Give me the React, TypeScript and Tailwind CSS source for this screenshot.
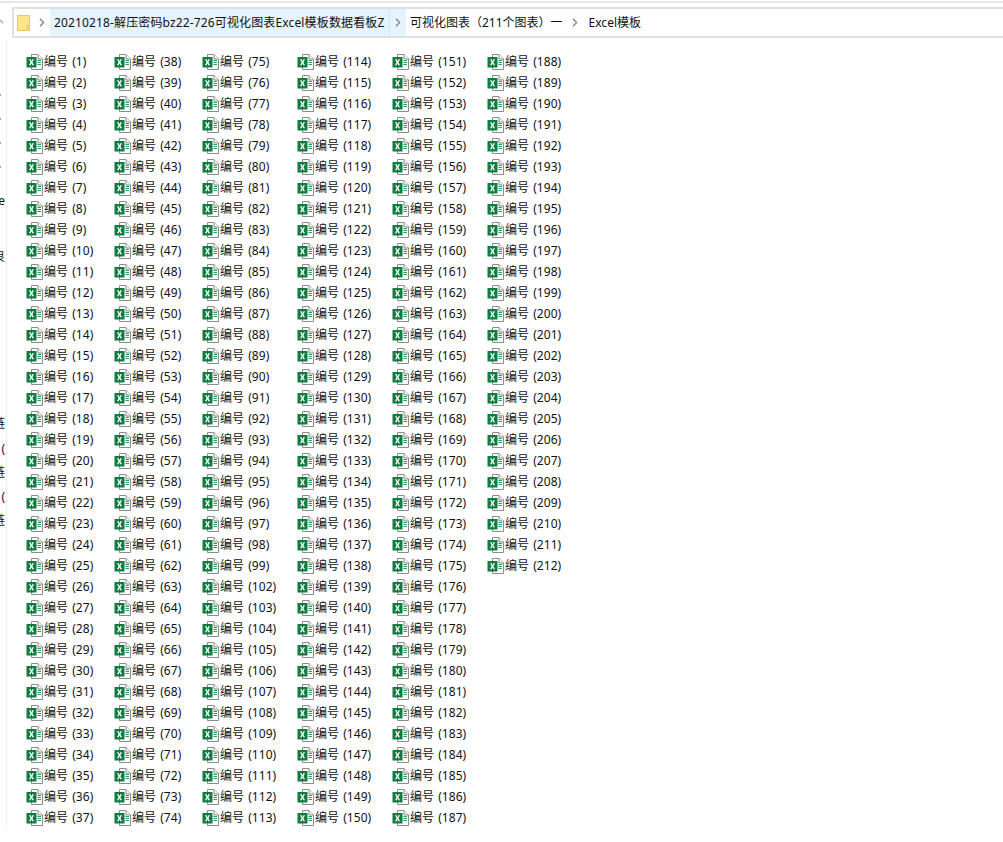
const FONT = "font-['Segoe_UI','Noto_Sans','Noto_Sans_CJK_SC',sans-serif]";

const columns: { width: string; numbers: number[] }[] = [
  { width: "w-[88px]", numbers: range(1, 37) },
  { width: "w-[88px]", numbers: range(38, 74) },
  { width: "w-[95px]", numbers: [...range(75, 99), ...range(102, 113)] },
  { width: "w-[95px]", numbers: range(114, 150) },
  { width: "w-[95px]", numbers: range(151, 187) },
  { width: "w-[95px]", numbers: range(188, 212) },
];

function range(from: number, to: number) {
  const out: number[] = [];
  for (let i = from; i <= to; i++) out.push(i);
  return out;
}

function ExcelIcon() {
  return (
    <svg width="17" height="16" viewBox="0 0 17 16" className="shrink-0">
      <path d="M5.5 .5H12L16.5 5V15.5H5.5Z" fill="#fff" stroke="#8c8c8c" />
      <path d="M12 .5V5H16.5" fill="#f4f4f4" stroke="#8c8c8c" />
      <rect x="11.5" y="6" width="3.5" height="1" fill="#21a366" />
      <rect x="11.5" y="8" width="3.5" height="1" fill="#21a366" />
      <rect x="11.5" y="10" width="3.5" height="1" fill="#21a366" />
      <rect x=".5" y="3" width="10" height="10.5" fill="#107c41" />
      <path d="M3 5.2H4.6L5.5 7.2 6.4 5.2H8L6.4 8.2 8 11.3H6.4L5.5 9.3 4.6 11.3H3L4.6 8.2Z" fill="#fff" />
    </svg>
  );
}

function Chevron() {
  return (
    <svg width="6" height="9" viewBox="0 0 6 9" className="shrink-0">
      <path d="M1 .8 4.6 4.5 1 8.2" fill="none" stroke="#838383" strokeWidth="1.3" />
    </svg>
  );
}

function FolderIcon() {
  return (
    <svg width="13" height="16" viewBox="0 0 13 16" className="shrink-0">
      <rect x=".5" y=".5" width="12" height="15" fill="#ffe48e" stroke="#e8c95c" />
      <rect x="10" y="10" width="2.5" height="5.5" fill="#f7d873" stroke="#e8c95c" strokeWidth=".6" />
    </svg>
  );
}

function SidebarTick() {
  return <div className="h-6 shrink-0 flex items-center"><div className="w-px h-0.5 bg-[#a0a0a0]" /></div>;
}

// the sidebar is cut off by the window, only the last pixels of its labels show
function SidebarBit({ text, className = "" }: { text: string; className?: string }) {
  return (
    <div className={`h-6 w-[5px] shrink-0 flex justify-end overflow-hidden leading-6 ${className}`}>
      <span className="shrink-0">{text}</span>
    </div>
  );
}

export default function App() {
  return (
    <div className={`${FONT} w-[1003px] h-[842px] bg-white text-[12px] text-[#111111] overflow-hidden`}>
      <div className="h-0.5 mt-px bg-[#e6e6e6]" />
      <div className="flex items-center">
        <svg width="8" height="8" viewBox="0 0 8 8" className="-ml-1 mr-1 shrink-0">
          <path d="M.5 6 3.5 2.5 7 6" fill="none" stroke="#9a9a9a" strokeWidth="1.2" />
        </svg>
        <div className="flex items-center ml-1 mt-1 h-[31px] w-[991px] border-y-2 border-l-2 border-[#e0e0e0] whitespace-nowrap">
          <div className="w-9 h-full flex items-center pl-[3px] gap-[9px] shrink-0">
            <FolderIcon />
            <Chevron />
          </div>
          <div className="h-full flex items-center pl-1 w-[340px] bg-[#e5f3ff] border-r border-[#cce8ff] tracking-[0.14px] shrink-0">
            20210218-解压密码bz22-726可视化图表Excel模板数据看板Z
          </div>
          <div className="h-full w-4 flex items-center justify-center bg-[#e5f3ff] shrink-0">
            <Chevron />
          </div>
          <span className="ml-1">可视化图表（211个图表）一</span>
          <span className="ml-[9px] mr-[11px]"><Chevron /></span>
          <span>Excel模板</span>
        </div>
      </div>
      <div className="flex">
        <div className="w-[7px] shrink-0 border-r border-[#f0f0f0] h-[792px] pt-[45px] flex flex-col">
          <SidebarTick />
          <SidebarTick />
          <SidebarTick />
          <SidebarTick />
          <SidebarBit text="e" className="mt-2.5" />
          <SidebarBit text="良" className="mt-8" />
          <SidebarBit text="链" className="mt-[143px]" />
          <SidebarBit text="(" className="mt-px" />
          <SidebarBit text="链" />
          <SidebarBit text="(" />
          <SidebarBit text="链" />
        </div>
        <div className="flex pl-[19px] pt-[13px]">
          {columns.map((col, i) => (
            <div key={i} className={`${col.width} flex flex-col`}>
              {col.numbers.map((n) => (
                <div key={n} className="h-[21px] flex items-center gap-[1px] whitespace-nowrap">
                  <ExcelIcon />
                  <span className="[word-spacing:1px] tracking-[0.03px]">编号 ({n})</span>
                </div>
              ))}
            </div>
          ))}
        </div>
      </div>
    </div>
  );
}
